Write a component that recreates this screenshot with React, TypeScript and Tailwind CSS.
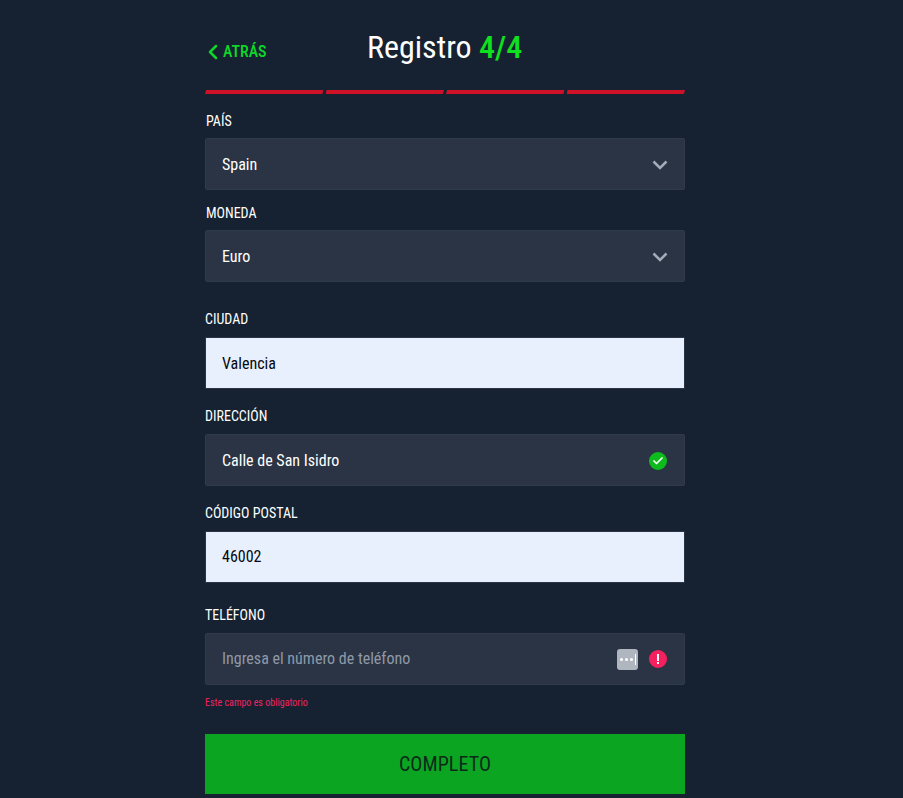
import { ChevronLeft, Check } from 'lucide-react';
import type { ReactNode } from 'react';

const font = { fontFamily: '"Roboto Condensed", Roboto, sans-serif' };

function Label({ children, className = '' }: { children: ReactNode; className?: string }) {
  return <div className={`h-5 text-[14px] leading-5 font-[450] text-white uppercase [font-stretch:75%] ${className}`}>{children}</div>;
}

function DarkBox({ children, className = 'mt-[7px] pt-[2px]' }: { children: ReactNode; className?: string }) {
  return (
    <div className={`flex h-[52px] items-center rounded-[2px] border border-[#2f3a4a] bg-[#2a3444] pl-4 pr-4 text-[16px] font-[450] text-white [font-stretch:75%] ${className}`}>
      {children}
    </div>
  );
}

function LightBox({ children, className = '' }: { children: ReactNode; className?: string }) {
  return (
    <div className={`mt-[8px] flex h-[52px] items-center border border-[#2a3444] bg-[#e8f0fe] pl-4 text-[16px] text-[#05080f] [font-stretch:75%] ${className}`}>
      {children}
    </div>
  );
}

function Arrow() {
  return (
    <svg width="16" height="10" viewBox="0 0 16 10" fill="none" className="text-[#a3adba]">
      <polyline points="1.5,1.5 8,8 14.5,1.5" stroke="currentColor" strokeWidth="2.5" />
    </svg>
  );
}

export default function App() {
  return (
    <div className="h-screen overflow-hidden bg-[#162231] pl-[205px]" style={font}>
      <div className="w-[480px]">
        <div className="relative flex h-[90px] items-start">
          <button className="mt-[40px] flex items-center text-[16px] leading-5 font-medium text-[#0fd72a] [font-stretch:75%]">
            <ChevronLeft className="ml-[-4px] mr-[-2px] h-6 w-6 stroke-[2.5]" />
            ATRÁS
          </button>
          <h1 className="absolute left-[162px] top-[27px] text-[32px] leading-10 text-white [font-stretch:75%]">
            Registro <span className="font-medium text-[#0fe01f]">4/4</span>
          </h1>
        </div>

        <div className="flex h-1 gap-[2px]">
          <div className="flex-1 bg-[#ce1126] [clip-path:polygon(1%_0,100%_0,99%_100%,0_100%)]" />
          <div className="flex-1 bg-[#ce1126] [clip-path:polygon(1%_0,100%_0,99%_100%,0_100%)]" />
          <div className="flex-1 bg-[#ce1126] [clip-path:polygon(1%_0,100%_0,99%_100%,0_100%)]" />
          <div className="flex-1 bg-[#ce1126] [clip-path:polygon(1%_0,100%_0,99%_100%,0_100%)]" />
        </div>

        <div className="mt-[17px]">
          <Label className="pl-px">País</Label>
          <DarkBox>
            <span className="flex-1">Spain</span>
            <Arrow />
          </DarkBox>
        </div>

        <div className="mt-[13px]">
          <Label className="pl-px">Moneda</Label>
          <DarkBox>
            <span className="flex-1">Euro</span>
            <Arrow />
          </DarkBox>
        </div>

        <div className="mt-[27px]">
          <Label>Ciudad</Label>
          <LightBox className="pt-px">Valencia</LightBox>
        </div>

        <div className="mt-[17px]">
          <Label>Dirección</Label>
          <DarkBox className="mt-[8px] pt-[2px]">
            <span className="flex-1">Calle de San Isidro</span>
            <span className="mr-px flex h-[18px] w-[18px] items-center justify-center rounded-full bg-[#0dbb1c]">
              <Check className="h-3 w-3 stroke-[3.5] text-white" />
            </span>
          </DarkBox>
        </div>

        <div className="mt-[17px]">
          <Label>Código postal</Label>
          <LightBox>46002</LightBox>
        </div>

        <div className="mt-[22px]">
          <Label>Teléfono</Label>
          <DarkBox className="mt-[8px]">
            <span className="flex-1 font-normal text-[#8f99a8]">Ingresa el número de teléfono</span>
            <span className="mr-[11px] flex h-[21px] w-[21px] items-center justify-center gap-[2px] rounded-[3px] bg-[#b0b6bf]">
              <span className="h-[3px] w-[3px] rounded-full bg-white" />
              <span className="h-[3px] w-[3px] rounded-full bg-white" />
              <span className="h-[3px] w-[3px] rounded-full bg-white" />
              <span className="h-[11px] w-px bg-white" />
            </span>
            <span className="mr-px flex h-[18px] w-[18px] flex-col items-center justify-center gap-px rounded-full bg-[#f5215f]">
              <span className="h-[7px] w-[2px] bg-white" />
              <span className="h-[2px] w-[2px] bg-white" />
            </span>
          </DarkBox>
        </div>

        <div className="mt-[12px] h-3 text-[10px] leading-3 text-[#f0245f]">Este campo es obligatorio</div>

        <button className="mt-[25px] h-[60px] w-full bg-[#0ca522] text-[20px] tracking-[0.1px] text-[#0c2a1a] uppercase [font-stretch:75%]">
          Completo
        </button>
      </div>
    </div>
  );
}
